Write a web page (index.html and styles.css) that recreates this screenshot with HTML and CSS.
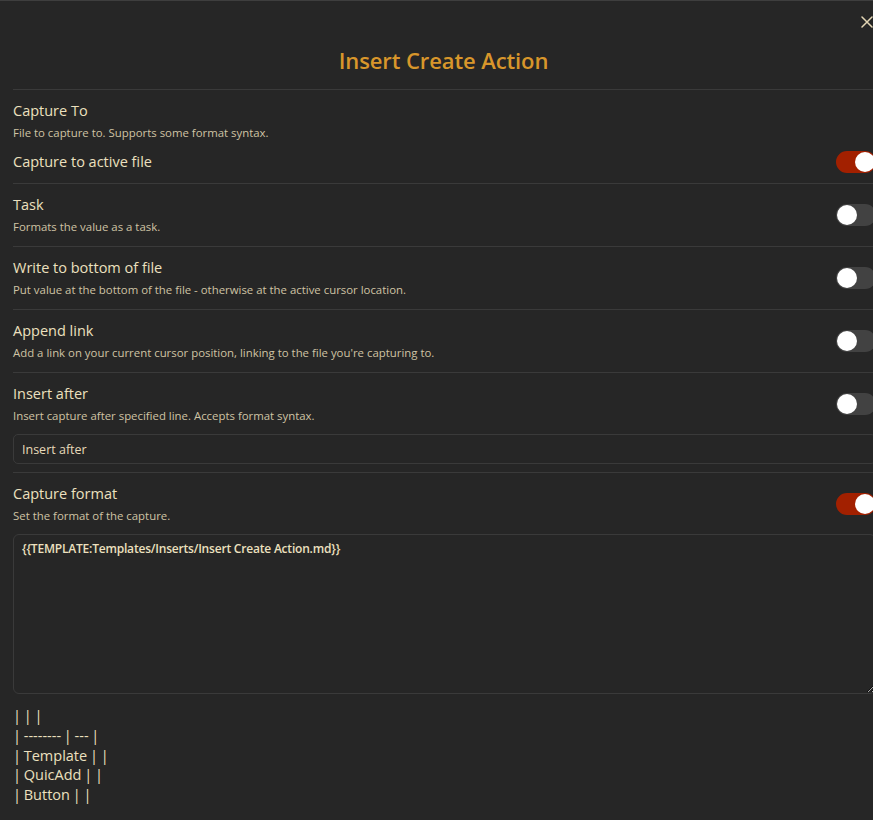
FILE: index.html
```html
<!DOCTYPE html>
<html>
<head>
<meta charset="utf-8">
<link rel="stylesheet" href="styles.css">
</head>
<body>
<div class="modal">
  <button class="close" aria-label="Close">
    <svg width="12" height="12" viewBox="0 0 12 12"><path d="M1 1L11 11M11 1L1 11" stroke="#e2d5b4" stroke-width="1.5" stroke-linecap="round"/></svg>
  </button>
  <h1 class="title">Insert Create Action</h1>
  <div class="content">
    <div class="item no-border plain">
      <div class="info">
        <div class="name">Capture To</div>
        <div class="desc">File to capture to. Supports some format syntax.</div>
      </div>
    </div>
    <div class="item no-border tight">
      <div class="info"><div class="name">Capture to active file</div></div>
      <div class="toggle on"><span class="knob"></span></div>
    </div>
    <div class="item">
      <div class="info">
        <div class="name">Task</div>
        <div class="desc">Formats the value as a task.</div>
      </div>
      <div class="toggle"><span class="knob"></span></div>
    </div>
    <div class="item">
      <div class="info">
        <div class="name">Write to bottom of file</div>
        <div class="desc">Put value at the bottom of the file - otherwise at the active cursor location.</div>
      </div>
      <div class="toggle"><span class="knob"></span></div>
    </div>
    <div class="item">
      <div class="info">
        <div class="name">Append link</div>
        <div class="desc">Add a link on your current cursor position, linking to the file you're capturing to.</div>
      </div>
      <div class="toggle"><span class="knob"></span></div>
    </div>
    <div class="item">
      <div class="info">
        <div class="name">Insert after</div>
        <div class="desc">Insert capture after specified line. Accepts format syntax.</div>
      </div>
      <div class="toggle"><span class="knob"></span></div>
    </div>
    <div class="field"><input class="text-input" type="text" value="Insert after"></div>
    <div class="item">
      <div class="info">
        <div class="name">Capture format</div>
        <div class="desc">Set the format of the capture.</div>
      </div>
      <div class="toggle on"><span class="knob"></span></div>
    </div>
    <textarea class="format" readonly>{{TEMPLATE:Templates/Inserts/Insert Create Action.md}}</textarea>
    <div class="table-text">
      <div>| | |</div>
      <div>| -------- | --- |</div>
      <div>| Template | |</div>
      <div>| QuicAdd | |</div>
      <div>| Button | |</div>
    </div>
  </div>
</div>
</body>
</html>
```
FILE: styles.css
```css
html, body {
  margin: 0;
  padding: 0;
  background: #262626;
  overflow: hidden;
  font-family: "Open Sans", "Noto Sans", sans-serif;
}
.modal {
  position: relative;
  width: 876px;
  height: 820px;
  box-sizing: border-box;
  border-top: 1px solid #3e3e3e;
  background: #262626;
  color: #e6dab9;
}
.close {
  position: absolute;
  top: 13px;
  right: 1px;
  width: 16px;
  height: 16px;
  padding: 0;
  border: 0;
  background: none;
  display: flex;
  align-items: center;
  justify-content: center;
}
.title {
  margin: 0;
  padding: 43px 0 0 11px;
  height: 45px;
  text-align: center;
  font-size: 22px;
  font-weight: 600;
  letter-spacing: -0.1px;
  color: #d8962b;
  line-height: 32px;
}
.content {
  margin: 0 0 0 13px;
  border-top: 1px solid #3a3a3a;
}
.item {
  display: flex;
  align-items: center;
  justify-content: space-between;
  border-top: 1px solid #3a3a3a;
  padding: 10px 0 11px;
  min-height: 41px;
}
.item.no-border { border-top: 0; }
.item.plain { padding: 11px 0 0; min-height: 0; }
.item.tight { padding: 10px 0 10px; min-height: 0; }
.info { flex: 1; }
.name {
  font-size: 14.5px;
  line-height: 20px;
  color: #ece0bf;
}
.desc {
  font-size: 11.4px;
  line-height: 17px;
  margin-top: 3px;
  color: #cfc3a4;
}
.toggle {
  width: 40px;
  height: 22px;
  border-radius: 11px;
  background: #424242;
  position: relative;
  flex: none;
}
.toggle.on { background: #a22000; }
.knob {
  position: absolute;
  top: 1px;
  left: 1px;
  width: 20px;
  height: 20px;
  border-radius: 50%;
  background: #ffffff;
}
.toggle.on .knob { left: 19px; }
.field {
  padding: 0 0 8px;
  margin-top: -1px;
}
.text-input {
  display: block;
  width: 100%;
  box-sizing: border-box;
  height: 30px;
  border: 1px solid #3a3a3a;
  border-radius: 5px;
  background: #262626;
  color: #e6dab9;
  font-family: inherit;
  font-size: 12.5px;
  padding: 0 8px;
  outline: none;
}
.format {
  display: block;
  width: 100%;
  box-sizing: border-box;
  height: 160px;
  margin-top: -1px;
  border: 1px solid #3a3a3a;
  border-radius: 6px;
  background: #262626;
  color: #ece0bf;
  font-family: inherit;
  font-size: 12px;
  font-weight: 600;
  letter-spacing: -0.2px;
  padding: 5px 8px;
  outline: none;
}
.table-text {
  margin-top: 12px;
  font-size: 14.5px;
  line-height: 19.8px;
  color: #ece0bf;
  word-spacing: -1px;
}
```
